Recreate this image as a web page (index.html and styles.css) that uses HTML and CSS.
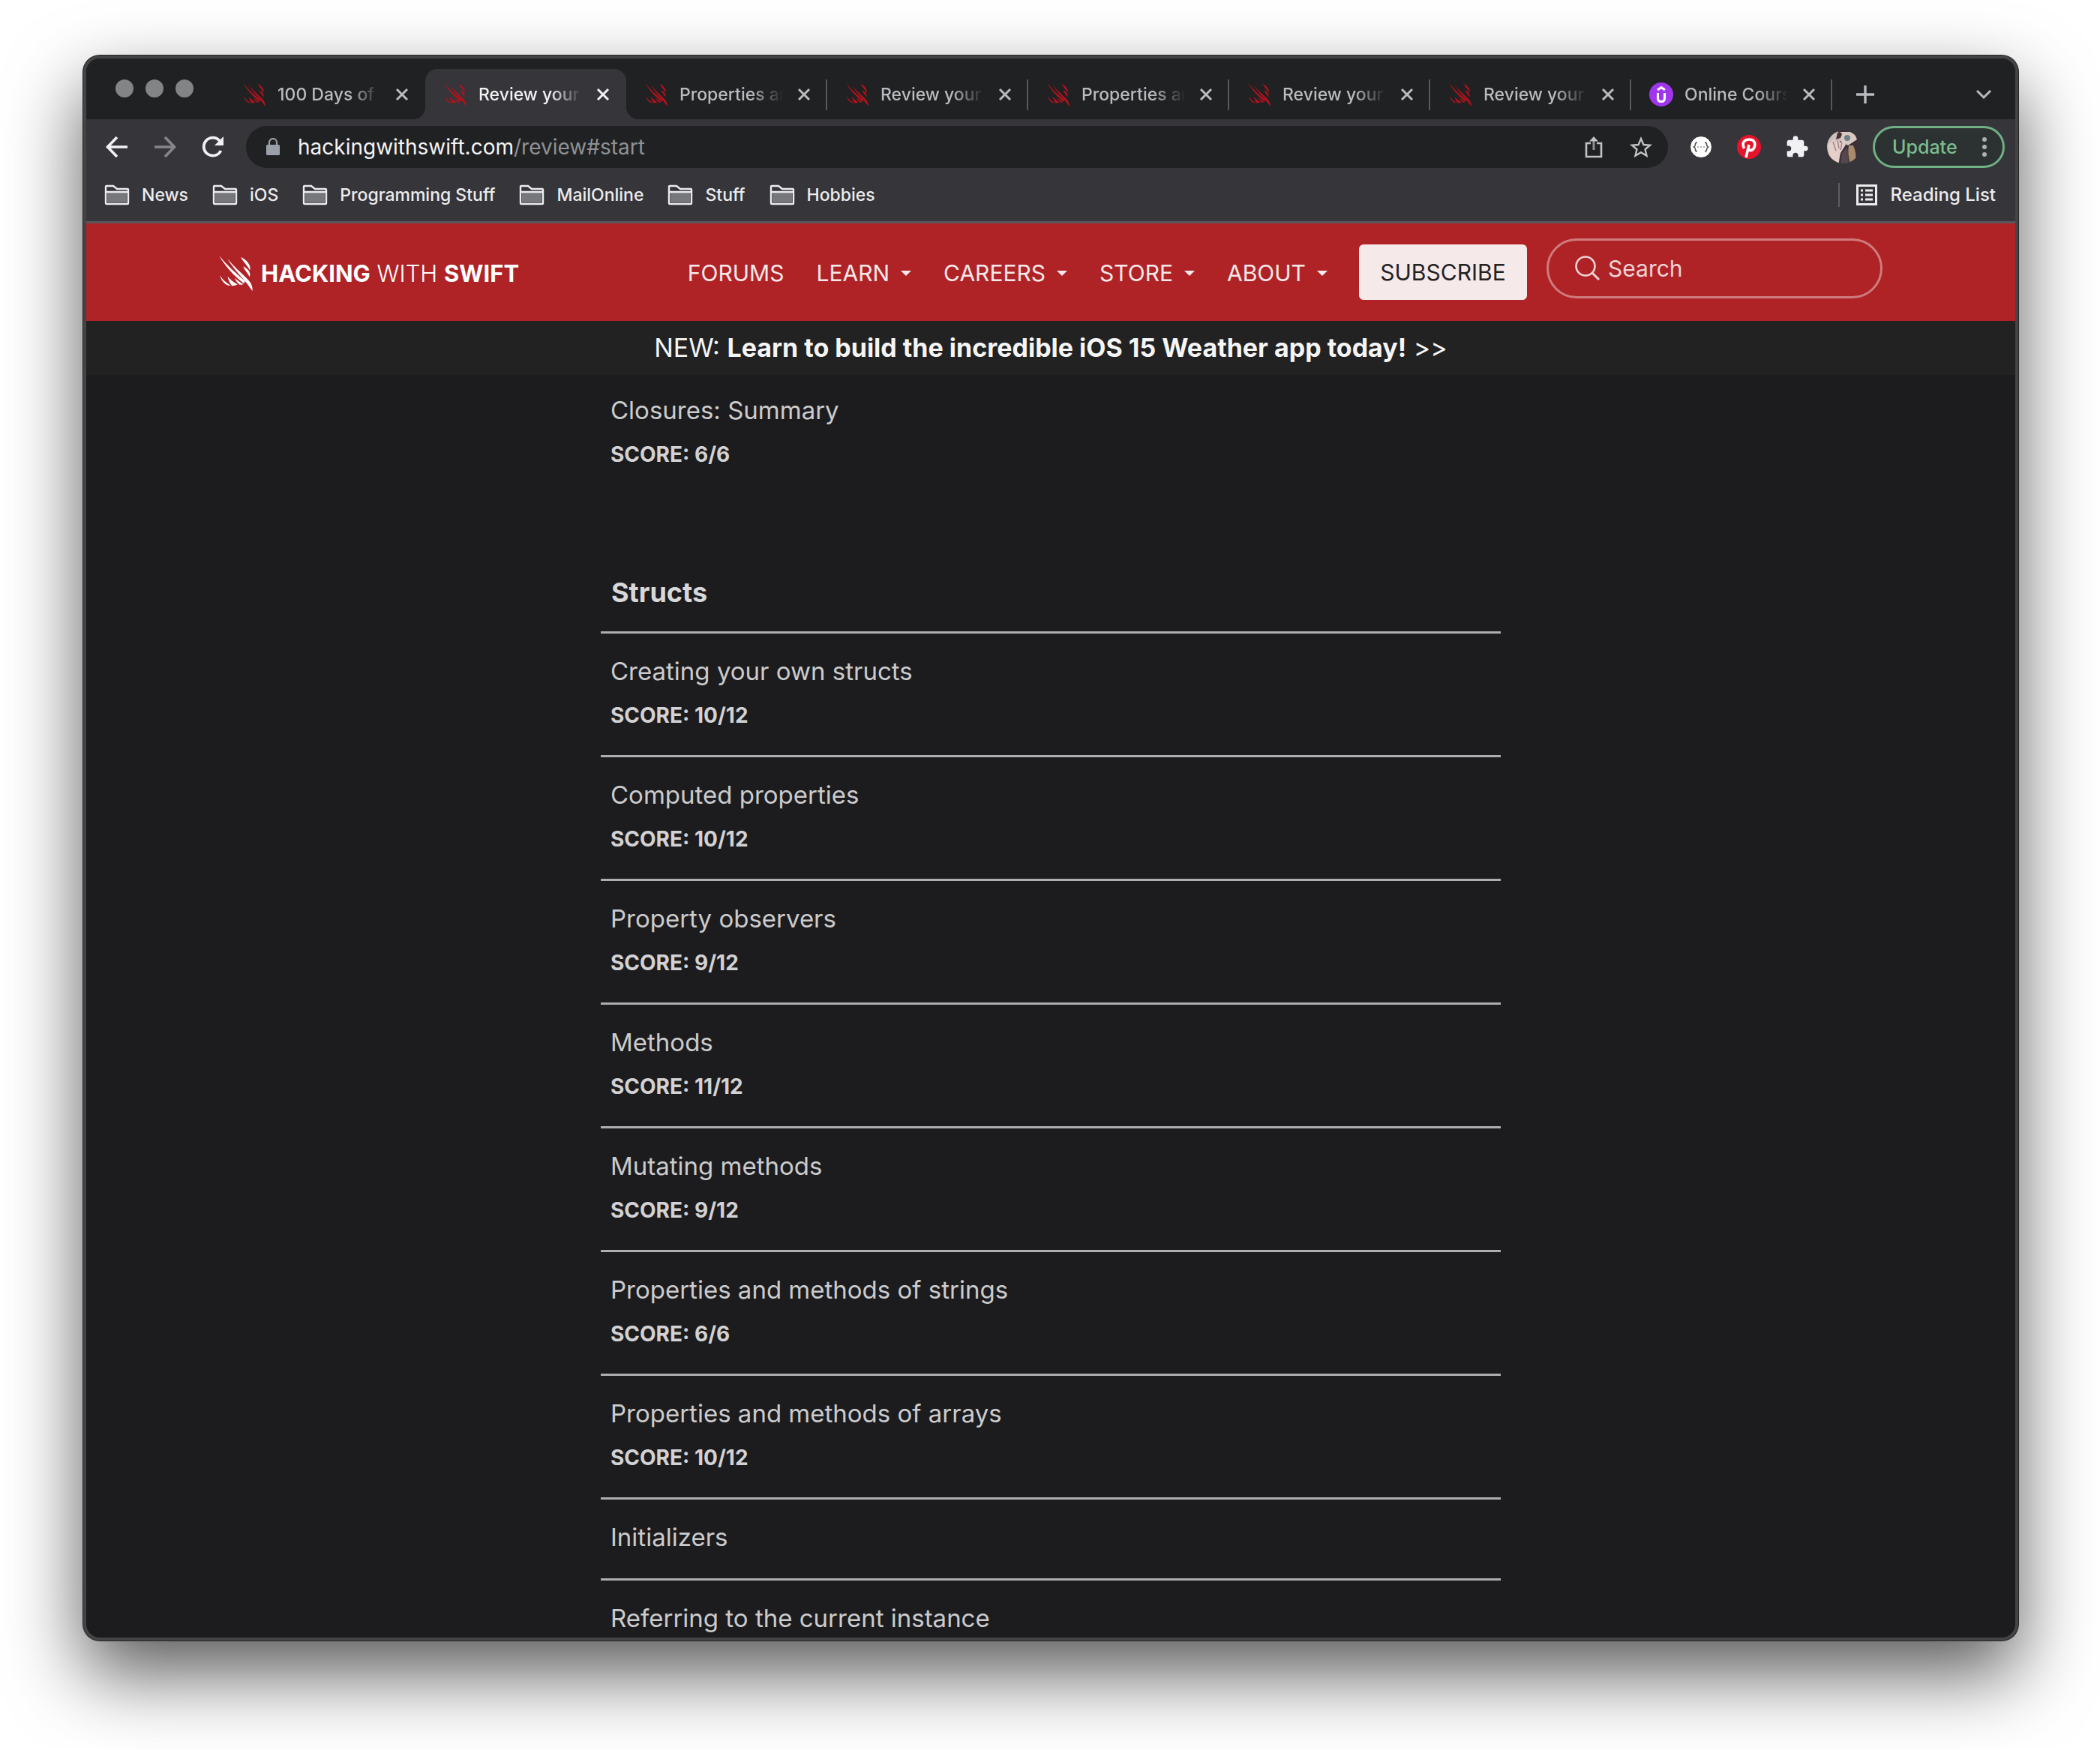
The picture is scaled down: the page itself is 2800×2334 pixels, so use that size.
FILE: index.html
```html
<!DOCTYPE html>
<html lang="en">
<head>
<meta charset="utf-8">
<title>Review your progress – Hacking with Swift</title>
<link rel="stylesheet" href="styles.css">
</head>
<body>
<svg class="defs" aria-hidden="true">
  <symbol id="swift" viewBox="0 0 134 144">
    <path d="M0 3C26 48 58 82 96 112C103 113 106 107 100 101C62 70 28 38 0 3Z"/>
    <path d="M34 16C56 54 86 84 108 110C118 122 126 134 133 144C136 126 126 108 110 93C84 68 58 46 34 16Z"/>
    <path d="M87 8C96 28 114 42 123 62C130 40 108 18 87 8Z"/>
    <path d="M96 46C102 62 114 72 122 88C129 68 112 54 96 46Z"/>
    <path d="M3 82C10 106 26 124 46 123C30 112 14 100 3 82Z"/>
    <path d="M34 86C38 104 46 118 52 124Q64 124 74 118C58 110 46 100 34 86Z"/>
    <path d="M62 92C68 106 76 114 82 119Q92 120 98 117C84 110 74 102 62 92Z"/>
  </symbol>
  <symbol id="close" viewBox="0 0 18 18"><path d="M2 2L16 16M16 2L2 16" fill="none" stroke="currentColor" stroke-width="3"/></symbol>
  <symbol id="folder" viewBox="0 0 34 28">
    <path d="M4 10H30V24H4Z" fill="#77787b"/>
    <path d="M2 24V3Q2 2 3 2H12L17 6H31Q32 6 32 7V25Q32 26 31 26H3Q2 26 2 24ZM2 10H32" fill="none" stroke="currentColor" stroke-width="2.4"/>
  </symbol>
</svg>

<main class="window">
  <div class="tabstrip">
    <div class="lights"><i></i><i></i><i></i></div>
    <div class="tab"><svg class="favicon"><use href="#swift"/></svg><a href="#">100 Days of</a><button aria-label="Close tab"><svg><use href="#close"/></svg></button></div>
    <div class="tab active"><svg class="favicon"><use href="#swift"/></svg><a href="#">Review your</a><button aria-label="Close tab"><svg><use href="#close"/></svg></button></div>
    <div class="tab ruled"><svg class="favicon"><use href="#swift"/></svg><a href="#">Properties an</a><button aria-label="Close tab"><svg><use href="#close"/></svg></button></div>
    <div class="tab ruled"><svg class="favicon"><use href="#swift"/></svg><a href="#">Review your</a><button aria-label="Close tab"><svg><use href="#close"/></svg></button></div>
    <div class="tab ruled"><svg class="favicon"><use href="#swift"/></svg><a href="#">Properties an</a><button aria-label="Close tab"><svg><use href="#close"/></svg></button></div>
    <div class="tab ruled"><svg class="favicon"><use href="#swift"/></svg><a href="#">Review your</a><button aria-label="Close tab"><svg><use href="#close"/></svg></button></div>
    <div class="tab ruled"><svg class="favicon"><use href="#swift"/></svg><a href="#">Review your</a><button aria-label="Close tab"><svg><use href="#close"/></svg></button></div>
    <div class="tab ruled"><svg class="favicon" viewBox="0 0 32 32"><circle cx="16" cy="16" r="16" fill="#a036ec"/><path d="M11 10L16 6.500L21 10M11.500 14V21Q11.500 25.500 16 25.500T20.500 21V14" fill="none" stroke="#fff" stroke-width="3"/></svg><a href="#">Online Cours</a><button aria-label="Close tab"><svg><use href="#close"/></svg></button></div>
    <button class="new-tab" aria-label="New tab"><svg width="24" height="24" viewBox="0 0 24 24"><path d="M12 0V24M0 12H24" stroke="currentColor" stroke-width="3.400"/></svg></button>
    <button class="tab-search" aria-label="Search tabs"><svg width="20" height="14" viewBox="0 0 20 14"><path d="M1 2L10 11L19 2" fill="none" stroke="currentColor" stroke-width="3"/></svg></button>
  </div>

  <div class="toolbar">
    <button aria-label="Back"><svg width="30" height="30" viewBox="0 0 30 30"><path d="M29 15H3M15 2L2.500 15L15 28" fill="none" stroke="#f1f1f3" stroke-width="3.600"/></svg></button>
    <button aria-label="Forward"><svg width="30" height="30" viewBox="0 0 30 30"><path d="M1 15H27M15 2L27.500 15L15 28" fill="none" stroke="#85868a" stroke-width="3.600"/></svg></button>
    <button aria-label="Reload"><svg width="30" height="30" viewBox="0 0 30 30"><path d="M25.500 20A12 12 0 1 1 24 7" fill="none" stroke="#f1f1f3" stroke-width="3.800"/><path d="M29 1V13H17Z" fill="#f1f1f3"/></svg></button>
    <div class="omnibox">
      <svg width="18" height="24" viewBox="0 0 18 24"><rect y="9" width="18" height="14" rx="1.500" fill="#9aa0a8"/><path d="M4 10V6A5 5 0 0 1 14 6V10" fill="none" stroke="#9aa0a8" stroke-width="2.200"/></svg>
      <a class="url" href="#start">hackingwithswift.com<span>/review#start</span></a>
      <button aria-label="Share"><svg width="24" height="30" viewBox="0 0 24 30"><path d="M8 10H2V28H22V10H16" fill="none" stroke="#c0c2c5" stroke-width="2.600"/><path d="M12 19V4" stroke="#8d8f92" stroke-width="3"/><path d="M6 7.500L12 1L18 7.500Z" fill="#c0c2c5"/></svg></button>
      <button aria-label="Bookmark"><svg width="30" height="28" viewBox="0 0 30 28"><path d="M15 3L18.400 11L27 11.700L20.500 17.300L22.500 25.700L15 21.200L7.500 25.700L9.500 17.300L3 11.700L11.600 11Z" fill="none" stroke="#c0c2c5" stroke-width="2.400"/></svg></button>
    </div>
    <div class="extensions">
      <button aria-label="JSON viewer"><svg width="32" height="32" viewBox="0 0 32 32"><circle cx="16" cy="16" r="14.500" fill="#fff" stroke="#1f2022"/><path d="M11 10Q8.500 10 8.500 12.500T6.500 16Q8.500 17 8.500 19.500T11 22M21 10Q23.500 10 23.500 12.500T25.500 16Q23.500 17 23.500 19.500T21 22" fill="none" stroke="#555" stroke-width="1.600"/><path d="M11 16H21" stroke="#999" stroke-width="1.500" stroke-dasharray="2 2"/></svg></button>
      <button aria-label="Pinterest"><svg width="32" height="32" viewBox="0 0 32 32"><circle cx="16" cy="16" r="16" fill="#e5132b"/><path d="M12 30L16 13M9.500 18C5.500 9 11 6 16.500 6C22 6 25 10 23.500 15C22 21 17 22 15 18.500" fill="none" stroke="#fff" stroke-width="3.600"/></svg></button>
      <button aria-label="Extensions"><svg width="32" height="32" viewBox="0 0 24 24"><path d="M20.500 11H19V7c0-1.100-.9-2-2-2h-4V3.500a2.500 2.500 0 0 0-5 0V5H4c-1.100 0-2 .9-2 2v3.800h1.500a2.700 2.700 0 0 1 0 5.400H2V20c0 1.100.9 2 2 2h3.800v-1.500a2.700 2.700 0 0 1 5.400 0V22H17c1.100 0 2-.9 2-2v-4h1.500a2.500 2.500 0 0 0 0-5z" fill="#f1f1f3"/></svg></button>
      <button aria-label="Profile"><svg width="44" height="44" viewBox="0 0 44 44"><clipPath id="face"><circle cx="22" cy="22" r="22"/></clipPath><g clip-path="url(#face)"><rect width="44" height="44" fill="#3a3038"/><path d="M0 0H14L18 8L16 44H0Z" fill="#cdbfc0"/><path d="M14 2H36L40 12L28 20L18 14Z" fill="#d9c8bf"/><path d="M2 18L9 12L11 16L14 10L17 17L22 13L25 19L18 30L15 44H3Z" fill="#e5cfcb"/><path d="M8 15L12 27M14 13L16 24M20 16L18 26" stroke="#a08584" stroke-width="1.500"/><path d="M14 3Q18 0 20 5L18 10L12 12Z" fill="#4a3034"/><circle cx="27" cy="10" r="4" fill="#6d7d8a"/><path d="M29 20Q27 32 31 44H38Q40 30 35 20Z" fill="#a98b6b"/><path d="M20 30L27 22L29 44H18Z" fill="#55474b"/></g></svg></button>
    </div>
    <button class="update">Update<svg width="8" height="28" viewBox="0 0 8 28"><g fill="#aeb0b3"><circle cx="4" cy="4" r="3"/><circle cx="4" cy="14" r="3"/><circle cx="4" cy="24" r="3"/></g></svg></button>
  </div>

  <nav class="bookmarks" aria-label="Bookmarks">
    <a href="#"><svg><use href="#folder"/></svg>News</a>
    <a href="#"><svg><use href="#folder"/></svg>iOS</a>
    <a href="#"><svg><use href="#folder"/></svg>Programming Stuff</a>
    <a href="#"><svg><use href="#folder"/></svg>MailOnline</a>
    <a href="#"><svg><use href="#folder"/></svg>Stuff</a>
    <a href="#"><svg><use href="#folder"/></svg>Hobbies</a>
    <a href="#" class="reading"><svg class="list" viewBox="0 0 28 28"><path d="M1.500 1.500H26.500V26.500H1.500Z" fill="none" stroke="currentColor" stroke-width="3"/><path d="M6 8H9M6 14H9M6 20H9M12 8H22M12 14H22M12 20H22" stroke="currentColor" stroke-width="3"/></svg>Reading List</a>
  </nav>

  <header class="site-header">
    <div class="container">
      <a class="logo" href="#"><svg><use href="#swift"/></svg><span><b>HACKING</b> WITH <b>SWIFT</b></span></a>
      <nav class="menu" aria-label="Main">
        <a href="#">FORUMS</a>
        <a href="#" class="drop">LEARN</a>
        <a href="#" class="drop">CAREERS</a>
        <a href="#" class="drop">STORE</a>
        <a href="#" class="drop">ABOUT</a>
      </nav>
      <button class="subscribe">SUBSCRIBE</button>
      <label class="search"><svg width="34" height="34" viewBox="0 0 34 34"><circle cx="14" cy="14" r="12.500" fill="none" stroke="currentColor" stroke-width="2.600"/><path d="M23 23L32 32" stroke="currentColor" stroke-width="3"/></svg><input type="search" placeholder="Search" aria-label="Search"></label>
    </div>
  </header>
  <a class="announce" href="#">NEW: <b>Learn to build the incredible iOS 15 Weather app today!</b> &gt;&gt;</a>

  <section class="content" id="start">
    <table>
      <tbody>
        <tr class="continued"><td><a href="#">Closures: Summary</a><strong>SCORE: 6/6</strong></td></tr>
      </tbody>
    </table>
    <table>
      <thead><tr><th scope="col">Structs</th></tr></thead>
      <tbody>
        <tr><td><a href="#">Creating your own structs</a><strong>SCORE: 10/12</strong></td></tr>
        <tr><td><a href="#">Computed properties</a><strong>SCORE: 10/12</strong></td></tr>
        <tr><td><a href="#">Property observers</a><strong>SCORE: 9/12</strong></td></tr>
        <tr><td><a href="#">Methods</a><strong>SCORE: 11/12</strong></td></tr>
        <tr><td><a href="#">Mutating methods</a><strong>SCORE: 9/12</strong></td></tr>
        <tr><td><a href="#">Properties and methods of strings</a><strong>SCORE: 6/6</strong></td></tr>
        <tr><td><a href="#">Properties and methods of arrays</a><strong>SCORE: 10/12</strong></td></tr>
        <tr><td><a href="#">Initializers</a></td></tr>
        <tr><td><a href="#">Referring to the current instance</a></td></tr>
      </tbody>
    </table>
  </section>
</main>
</body>
</html>
```
FILE: styles.css
```css
* { box-sizing: border-box; }

body {
  margin: 0;
  height: 100vh;
  padding: 74px 109px 146px 111px;
  background: #fff;
  font-family: Inter, "Liberation Sans", sans-serif;
  overflow: hidden;
}

a { color: inherit; text-decoration: none; }
button { border: 0; padding: 0; background: none; color: inherit; font: inherit; display: flex; align-items: center; }
svg { display: block; flex: none; }
.defs { position: absolute; width: 0; height: 0; }

.window {
  height: 100%;
  display: flex;
  flex-direction: column;
  border: 4px solid #444446;
  border-radius: 22px;
  overflow: hidden;
  background: #1c1c1e;
  box-shadow: 0 0 0 1px #242424, 0 44px 100px rgba(0, 0, 0, .65);
}
.window > * { flex: none; }

/* Tab strip */
.tabstrip {
  display: flex;
  align-items: flex-end;
  height: 81px;
  padding-right: 32px;
  background: #202123;
  color: #b9bbbf;
}
.lights { display: flex; gap: 16px; width: 184px; padding: 0 0 29px 39px; }
.lights i { width: 24px; height: 24px; border-radius: 50%; background: #838486; }
.tab {
  position: relative;
  display: flex;
  align-items: center;
  width: 268px;
  height: 67px;
  padding: 0 22px 0 24px;
  font-size: 23px;
  font-weight: 500;
}
.favicon { width: 32px; height: 32px; fill: #b3121b; }
.tab a {
  flex: 1;
  min-width: 0;
  margin: 0 16px 0 15px;
  overflow: hidden;
  white-space: nowrap;
  line-height: 32px;
  -webkit-mask-image: linear-gradient(to right, #000 68%, transparent 98%);
  mask-image: linear-gradient(to right, #000 68%, transparent 98%);
}
.tab button svg { width: 18px; height: 18px; }
.tab.active { background: #36353a; border-radius: 16px 16px 0 0; color: #f1f1f3; }
.tab.active::before, .tab.active::after {
  content: "";
  position: absolute;
  bottom: 0;
  width: 16px;
  height: 16px;
}
.tab.active::before { right: 100%; background: radial-gradient(circle at 0 0, transparent 16px, #36353a 16px); }
.tab.active::after { left: 100%; background: radial-gradient(circle at 100% 0, transparent 16px, #36353a 16px); }
.tab.ruled::after {
  content: "";
  position: absolute;
  right: 0;
  top: 14px;
  width: 2px;
  height: 41px;
  background: #57585b;
}
.new-tab { height: 67px; margin-left: 32px; }
.tab-search { height: 67px; margin-left: auto; }

/* Toolbar */
.toolbar { display: flex; align-items: center; gap: 34px; height: 74px; padding: 0 14px 0 26px; background: #36353a; }
.omnibox {
  display: flex;
  align-items: center;
  flex: 1;
  height: 56px;
  margin-left: -5px;
  padding: 0 21px 0 27px;
  border-radius: 28px;
  background: #202123;
  font-size: 28px;
}
.url { flex: 1; margin-left: 24px; color: #f4f4f5; }
.url span { color: #8f9194; }
.omnibox button + button { margin-left: 36px; }
.extensions { display: flex; align-items: center; gap: 32px; margin-left: -6px; }
.extensions button:last-child { margin-left: -8px; }
.update {
  justify-content: space-between;
  width: 176px;
  height: 56px;
  margin-left: -17px;
  padding: 0 20px 0 23px;
  border: 3px solid #6fb084;
  border-radius: 28px;
  background: #2c3232;
  color: #7cbd90;
  font-size: 25px;
  font-weight: 500;
}

/* Bookmarks */
.bookmarks {
  display: flex;
  align-items: center;
  gap: 32px;
  height: 62px;
  padding: 0 26px 8px 24px;
  background: #36353a;
  color: #ececee;
  font-size: 23px;
  font-weight: 500;
}
.bookmarks a { display: flex; align-items: center; gap: 16px; line-height: 32px; }
.bookmarks svg { width: 34px; height: 28px; }
.bookmarks .reading { margin-left: auto; padding-left: 22px; border-left: 2px solid #5c5d61; gap: 18px; font-size: 24px; }
.bookmarks .list { width: 28px; }

/* Site header */
.site-header { height: 133px; border-top: 3px solid #5a5659; background: #af2327; color: #f7e8e9; }
.container { display: flex; align-items: flex-start; max-width: 2218px; margin: 0 auto; padding-top: 20px; font-size: 30px; }
.logo { display: flex; align-items: center; gap: 11px; height: 92px; color: #fff; font-size: 31px; font-weight: 300; }
.logo b { font-weight: 700; }
.logo svg { width: 45px; height: 48px; fill: #fff; }
.menu { display: flex; gap: 43px; margin-left: auto; line-height: 92px; }
.drop { display: flex; align-items: center; gap: 15px; }
.drop::after { content: ""; border: 7px solid transparent; border-top-color: currentColor; border-bottom: 0; }
.subscribe {
  justify-content: center;
  width: 224px;
  height: 74px;
  margin: 8px 26px 0 42px;
  border-radius: 6px;
  background: #f6e9e9;
  color: #222;
}
.search {
  display: flex;
  align-items: center;
  gap: 10px;
  width: 448px;
  height: 80px;
  padding: 0 35px;
  border: 3px solid #cf7b7d;
  border-radius: 40px;
  color: #efd3d4;
}
.search input { flex: 1; min-width: 0; padding: 0; border: 0; outline: 0; background: none; color: inherit; font: inherit; }
.search input::placeholder { color: #efd3d4; opacity: 1; }

.announce { padding: 10px 0; background: #222; color: #f5f5f5; font-size: 34px; line-height: 52px; text-align: center; }

/* Review list */
.window > .content { flex: 1; min-height: 0; overflow: hidden; color: #cbcbcd; }
table { width: 1200px; max-width: 100%; margin: 0 auto 104px; border-spacing: 0; }
th { padding: 0 14px 25px; text-align: left; font-size: 36px; line-height: 54px; color: #d8d8da; }
td { padding: 23px 13px 28px; border-top: 3px solid #aeaeb2; }
.continued td { border-top: 0; padding-top: 20px; }
td a { display: block; font-size: 33px; line-height: 54px; }
td strong { display: block; margin-top: 7px; font-size: 28px; line-height: 50px; color: #d2d2d4; }
```
